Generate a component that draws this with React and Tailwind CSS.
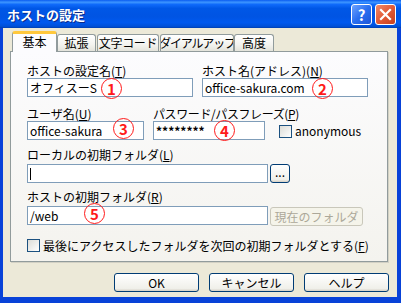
import React from "react";

const ui = "font-['MS_UI_Gothic','Noto_Sans_CJK_JP',sans-serif]";

function Field({ className = "", children }) {
  return (
    <div
      className={`flex h-[19px] items-center border border-[#7F9DB9] bg-white pl-[2px] text-[12px] leading-[14px] text-black ${className}`}
    >
      {children}
    </div>
  );
}

function Label({ children, className = "" }) {
  return (
    <div className={`h-[15px] whitespace-nowrap text-[12px] leading-[15px] text-black ${className}`}>
      {children}
    </div>
  );
}

function Check() {
  return (
    <span className="block h-[13px] w-[13px] shrink-0 border border-[#1C5180] bg-[linear-gradient(135deg,#dcdcd7_0%,#ffffff_100%)]" />
  );
}

function Button({ children, className = "", disabled }) {
  return (
    <div
      className={
        disabled
          ? `flex items-center justify-center whitespace-nowrap rounded-[3px] border border-[#C9C7BA] bg-[#F5F4EA] text-[12px] leading-[14px] text-[#ACA899] ${className}`
          : `flex items-center justify-center whitespace-nowrap rounded-[3px] border border-[#003C74] bg-[linear-gradient(#ffffff,#f0f0ea_85%,#d6d0c5)] text-[12px] leading-[14px] text-black ${className}`
      }
    >
      {children}
    </div>
  );
}

function Tab({ label, active, className = "" }) {
  if (active) {
    return (
      <div
        className={`relative z-10 -mb-[1px] flex h-[21px] items-start justify-center whitespace-nowrap rounded-t-[3px] border-x border-[#919B9C] border-t-[3px] border-t-[#FFC83C] bg-[#FCFCFE] pt-[1px] text-[12px] leading-[14px] ${className}`}
      >
        {label}
      </div>
    );
  }
  return (
    <div
      className={`flex h-[17px] items-center justify-center overflow-hidden whitespace-nowrap rounded-t-[3px] border-x border-t border-[#919B9C] bg-[linear-gradient(#ffffff,#f3f3ef_60%,#e3e3db)] text-[12px] leading-[14px] ${className}`}
    >
      {label}
    </div>
  );
}

function Mark({ n, className }) {
  return (
    <span
      className={`absolute flex h-[21px] w-[21px] items-center justify-center rounded-full border-[1.5px] border-[#FF1A1A] text-[15px] font-bold leading-none text-[#FF1A1A] ${className}`}
    >
      {n}
    </span>
  );
}

export default function App() {
  return (
    <div className={`relative flex h-[303px] w-[401px] flex-col overflow-hidden bg-[#0842d8] ${ui}`}>
      {/* title bar */}
      <div className="flex h-[28px] shrink-0 items-center bg-[linear-gradient(#0a5cf0_0%,#3d95ff_8%,#0f6afa_16%,#0057e6_30%,#0054e3_60%,#0059ef_80%,#0050d8_94%,#003fb0_100%)] pl-[7px] pr-[5px]">
        <span className="text-[13px] font-bold leading-[15px] text-white [text-shadow:1px_1px_0_#0a2a8a]">
          ホストの設定
        </span>
        <div className="ml-auto flex gap-[3px]">
          <div className="flex h-[21px] w-[21px] items-center justify-center rounded-[3px] border border-white bg-[linear-gradient(135deg,#6ea3ff,#2a6ff0_50%,#1c55d8)] text-[15px] font-bold leading-none text-white">
            ?
          </div>
          <div className="flex h-[21px] w-[21px] items-center justify-center rounded-[3px] border border-white bg-[linear-gradient(135deg,#f08a6a,#e25a36_50%,#c8401e)]">
            <svg width="13" height="13" viewBox="0 0 13 13">
              <path d="M2 2 L11 11 M11 2 L2 11" stroke="white" strokeWidth="2.2" strokeLinecap="square" />
            </svg>
          </div>
        </div>
      </div>

      {/* body */}
      <div className="mb-[6px] ml-[3px] mr-[4px] flex flex-1 flex-col bg-[#ECE9D8]">
        {/* tabs */}
        <div className="mt-[3px] flex h-[20px] items-end pl-[9px]">
          <Tab label="基本" active className="w-[45px]" />
          <Tab label="拡張" className="w-[39px]" />
          <Tab label="文字コード" className="ml-[1px] w-[62px] text-[11px] tracking-[-0.3px]" />
          <Tab label="ダイアルアップ" className="ml-[1px] w-[74px] text-[11px] tracking-[-1.2px]" />
          <Tab label="高度" className="w-[40px]" />
        </div>

        {/* panel */}
        <div className="ml-[7px] flex h-[211px] w-[378px] flex-col border border-[#919B9C] bg-[linear-gradient(#fcfcfe,#f4f3ee)] pl-[16px] shadow-[1px_1px_0_#d2d0c4]">
          <div className="mt-[11px] flex gap-[9px]">
            <div className="w-[166px]">
              <Label>
                ホストの設定名(<span className="underline">T</span>)
              </Label>
              <Field>オフィスーS</Field>
            </div>
            <div className="w-[166px]">
              <Label>
                ホスト名(アドレス)(<span className="underline">N</span>)
              </Label>
              <Field>office-sakura.com</Field>
            </div>
          </div>

          <div className="mt-[9px] flex items-end">
            <div className="w-[117px]">
              <Label>
                ユーザ名(<span className="underline">U</span>)
              </Label>
              <Field className="h-[18px]">office-sakura</Field>
            </div>
            <div className="ml-[9px] w-[112px]">
              <Label className="tracking-[-0.4px]">
                パスワード/パスフレーズ(<span className="underline">P</span>)
              </Label>
              <Field className="h-[18px] text-[11px] font-bold">********</Field>
            </div>
            <div className="mb-[2px] ml-[14px] flex items-center gap-[3px] text-[12px] leading-[14px]">
              <Check />
              <span>anonymous</span>
            </div>
          </div>

          <Label className="mt-[7px]">
            ローカルの初期フォルダ(<span className="underline">L</span>)
          </Label>
          <div className="mt-[2px] flex gap-[2px]">
            <Field className="w-[241px]">
              <span className="h-[12px] w-[1px] bg-black" />
            </Field>
            <Button className="h-[19px] w-[20px] pb-[3px]">...</Button>
          </div>

          <Label className="mt-[6px]">
            ホストの初期フォルダ(<span className="underline">R</span>)
          </Label>
          <div className="mt-[2px] flex gap-[2px]">
            <Field className="w-[241px]">/web</Field>
            <Button disabled className="mt-[1px] h-[19px] w-[93px]">
              現在のフォルダ
            </Button>
          </div>

          <div className="mt-[12px] flex items-center gap-[3px] text-[12px] leading-[15px]">
            <Check />
            <span>
              最後にアクセスしたフォルダを次回の初期フォルダとする(<span className="underline">F</span>)
            </span>
          </div>
        </div>

        {/* dialog buttons */}
        <div className="mt-[11px] flex justify-end gap-[10px] pr-[8px]">
          <Button className="h-[19px] w-[85px]">OK</Button>
          <Button className="h-[19px] w-[85px]">キャンセル</Button>
          <Button className="h-[19px] w-[85px]">ヘルプ</Button>
        </div>
      </div>

      {/* annotation marks */}
      <Mark n="1" className="left-[101px] top-[78px]" />
      <Mark n="2" className="left-[312px] top-[78px]" />
      <Mark n="3" className="left-[113px] top-[118px]" />
      <Mark n="4" className="left-[214px] top-[120px]" />
      <Mark n="5" className="left-[84px] top-[203px]" />
    </div>
  );
}
